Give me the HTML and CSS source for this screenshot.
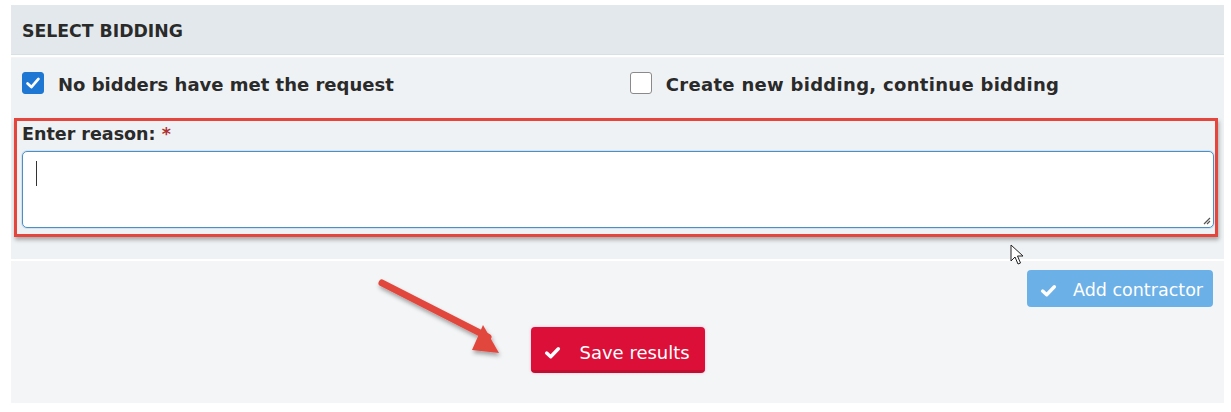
FILE: index.html
```html
<!DOCTYPE html>
<html>
<head>
<meta charset="utf-8">
<link rel="stylesheet" href="styles.css">
</head>
<body>
<div class="panel">
  <div class="panel-head">SELECT BIDDING</div>
  <div class="panel-body">
    <div class="choices">
      <label class="choice">
        <span class="box checked">
          <svg viewBox="0 0 22 22" width="22" height="22"><path d="M5 11.5 L9.2 15.5 L17 6.5" fill="none" stroke="#fff" stroke-width="3" stroke-linecap="round" stroke-linejoin="round"/></svg>
        </span>
        <span class="choice-text">No bidders have met the request</span>
      </label>
      <label class="choice choice-2">
        <span class="box"></span>
        <span class="choice-text wide">Create new bidding, continue bidding</span>
      </label>
    </div>
    <div class="reason">
      <div class="reason-label">Enter reason: <span class="req">*</span></div>
      <div class="textarea">
        <span class="caret"></span>
        <svg class="grip" viewBox="0 0 10 10" width="10" height="10"><path d="M9 3 L3 9 M9 6 L6 9" stroke="#555" stroke-width="1.2"/></svg>
      </div>
    </div>
  </div>
  <div class="panel-foot">
    <div class="foot-row">
      <button class="btn btn-blue"><svg viewBox="0 0 16 16" width="17" height="17"><path d="M2.5 8.5 L6.3 12 L13.5 4.5" fill="none" stroke="#fff" stroke-width="3.2" stroke-linecap="round" stroke-linejoin="round"/></svg>Add contractor</button>
    </div>
    <div class="foot-center">
      <button class="btn btn-red"><svg viewBox="0 0 16 16" width="17" height="17"><path d="M2.5 8.5 L6.3 12 L13.5 4.5" fill="none" stroke="#fff" stroke-width="3.2" stroke-linecap="round" stroke-linejoin="round"/></svg>Save results</button>
    </div>
  </div>
</div>
<svg class="arrow" width="160" height="100" viewBox="0 0 160 100">
  <defs>
    <filter id="sh" x="-20%" y="-20%" width="140%" height="140%">
      <feDropShadow dx="1" dy="3" stdDeviation="2" flood-color="#000" flood-opacity="0.35"/>
    </filter>
  </defs>
  <g filter="url(#sh)">
    <line x1="22" y1="13" x2="128" y2="67" stroke="#e2473c" stroke-width="7" stroke-linecap="round"/>
    <polygon points="112,80 139,83 123,55" fill="#e2473c"/>
  </g>
</svg>
<svg class="cursor" width="16" height="22" viewBox="0 0 16 22">
  <path d="M1 1 L1 17 L5 13 L8 20 L10.5 19 L7.5 12 L13 12 Z" fill="#fff" stroke="#222" stroke-width="1"/>
</svg>
</body>
</html>
```
FILE: styles.css
```css
* { box-sizing: border-box; }
body {
  margin: 0;
  background: #ffffff;
  font-family: "DejaVu Sans", "Liberation Sans", sans-serif;
  color: #2b2b2b;
  width: 1231px;
  height: 412px;
  overflow: hidden;
  position: relative;
}
.panel {
  margin: 5px 0 0 11px;
  width: 1213px;
}
.panel-head {
  height: 50px;
  background: #e2e8eb;
  border-bottom: 1px solid #d6e2e2;
  padding: 3px 0 0 11px;
  display: flex;
  align-items: center;
  font-weight: bold;
  font-size: 17.3px;
  color: #2a2a2a;
}
.panel-body {
  margin-top: 2px;
  background: #eff2f4;
  border-top: 1px solid #f4f4f4;
  height: 202px;
  padding-top: 13px;
}
.choices {
  display: flex;
  padding-left: 11px;
  height: 23px;
  align-items: center;
}
.choice {
  display: flex;
  align-items: center;
}
.choice-2 { margin-left: 236px; }
.box {
  width: 22px;
  height: 22px;
  border-radius: 3px;
  border: 1px solid #8a8a8a;
  background: #fff;
  display: flex;
  align-items: center;
  justify-content: center;
}
.box.checked {
  background: #1f77d4;
  border-color: #1f77d4;
}
.choice-text {
  margin-left: 14px;
  font-weight: bold;
  font-size: 18px;
  color: #2a2a2a;
  padding-top: 3px;
}
.choice-text.wide { letter-spacing: 0.3px; }
.reason {
  margin: 24px 0 0 3px;
  width: 1204px;
  height: 119px;
  border: 3px solid #e4463e;
  box-shadow: 1px 3px 4px rgba(0,0,0,0.3);
  padding: 2px 2px 0 5px;
}
.reason-label {
  font-weight: bold;
  font-size: 17.5px;
  color: #2a2a2a;
  height: 28px;
  padding-top: 1px;
}
.req { color: #b03030; }
.textarea {
  position: relative;
  width: 1192px;
  height: 77px;
  background: #fff;
  border: 1px solid #4d8fc4;
  border-radius: 5px;
  box-shadow: 0 0 0 1px #cfe3f2;
}
.caret {
  position: absolute;
  left: 13px;
  top: 9px;
  width: 1px;
  height: 25px;
  background: #333;
}
.grip {
  position: absolute;
  right: 2px;
  bottom: 2px;
}
.panel-foot {
  margin-top: 2px;
  background: #f3f5f7;
  height: 142px;
  padding-top: 9px;
}
.foot-row {
  display: flex;
  justify-content: flex-end;
  padding-right: 11px;
}
.foot-center {
  display: flex;
  justify-content: center;
  margin-top: 20px;
}
.btn {
  border: none;
  border-radius: 4px;
  color: #fff;
  font-family: "DejaVu Sans", "Liberation Sans", sans-serif;
  display: flex;
  align-items: center;
  gap: 16px;
}
.btn-blue {
  width: 186px;
  height: 37px;
  background: #6cb0e8;
  padding: 3px 0 0 13px;
  font-size: 17.5px;
}
.btn-red {
  width: 174px;
  height: 46px;
  background: #dc0f38;
  border-bottom: 3px solid #c10d30;
  padding: 7px 0 0 13px;
  font-size: 18px;
  gap: 19px;
  box-shadow: 0 0 3px rgba(255,150,200,0.6);
}
.arrow {
  position: absolute;
  left: 360px;
  top: 270px;
}
.cursor {
  position: absolute;
  left: 1010px;
  top: 244px;
}
```
